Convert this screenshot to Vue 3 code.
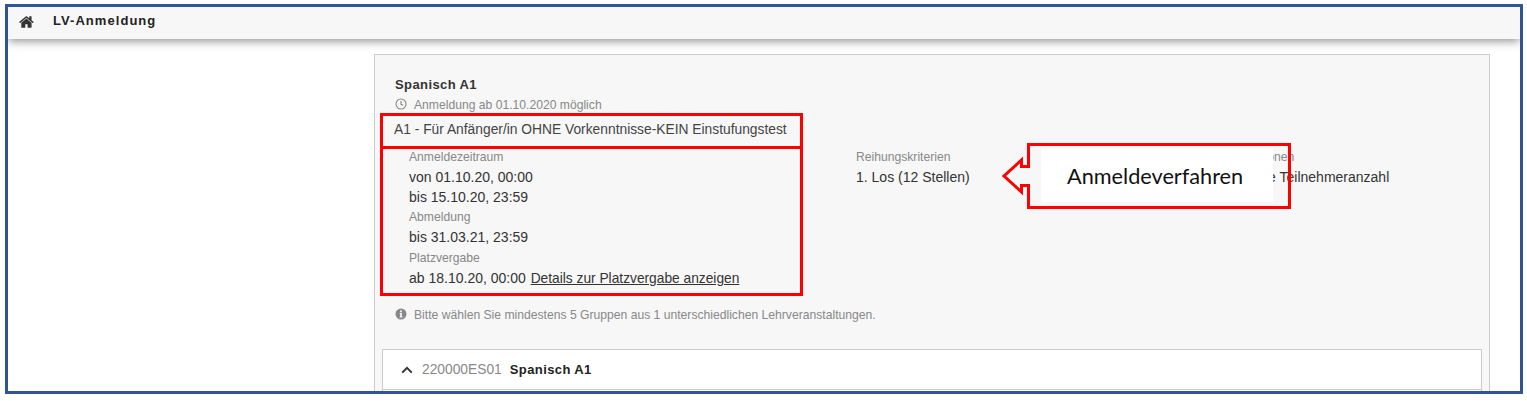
<template>
  <div class="page">
    <div class="frame">
      <header class="topbar">
        <svg class="home" viewBox="0 0 1792 1792" aria-hidden="true">
          <path d="M1408 992v480q0 26-19 45t-45 19h-384v-384h-256v384h-384q-26 0-45-19t-19-45v-480q0-1 .5-3t.5-3l575-474 575 474q1 2 1 6zm223-69l-62 74q-8 9-21 11h-3q-13 0-21-7l-692-577-692 577q-12 8-24 7-13-2-21-11l-62-74q-8-10-7-23.500t11-21.500l719-599q32-26 76-26t76 26l244 204v-195q0-14 9-23t23-9h192q14 0 23 9t9 23v408l219 182q10 8 11 21.500t-7 23.500z" />
        </svg>
        <span class="topbar-title">LV-Anmeldung</span>
      </header>

      <section class="panel">
        <div class="head">
          <div class="course">Spanisch A1</div>
          <div class="note clock-note">
            <svg class="note-icon" viewBox="0 0 12 12" aria-hidden="true">
              <circle cx="6" cy="6" r="5" fill="none" stroke="currentColor" stroke-width="1.100" />
              <path d="M6 3v3.300l2.200 1" fill="none" stroke="currentColor" stroke-width="1.100" />
            </svg>
            Anmeldung ab 01.10.2020 möglich
          </div>
          <div class="group-title">A1 - Für Anfänger/in OHNE Vorkenntnisse-KEIN Einstufungstest</div>

          <div class="columns">
            <div class="col">
              <div class="label">Anmeldezeitraum</div>
              <div class="value first">von 01.10.20, 00:00</div>
              <div class="value">bis 15.10.20, 23:59</div>
              <div class="label near">Abmeldung</div>
              <div class="value first">bis 31.03.21, 23:59</div>
              <div class="label nearer">Platzvergabe</div>
              <div class="value first">ab 18.10.20, 00:00 <a class="link">Details zur Platzvergabe anzeigen</a></div>
            </div>
            <div class="col">
              <div class="label">Reihungskriterien</div>
              <div class="value first">1. Los (12 Stellen)</div>
            </div>
            <div class="col">
              <div class="label shifted">Informationen</div>
              <div class="value first">Maximale Teilnehmeranzahl</div>
            </div>
          </div>

          <div class="note hint">
            <svg class="note-icon" viewBox="0 0 12 12" aria-hidden="true">
              <circle cx="6" cy="6" r="5.500" fill="currentColor" />
              <rect x="5.100" y="2.400" width="1.800" height="1.800" fill="#f6f6f6" />
              <path d="M4.700 5.100h2.200v3.300h.6v1H4.500v-1h.7V6.100h-.5z" fill="#f6f6f6" />
            </svg>
            Bitte wählen Sie mindestens 5 Gruppen aus 1 unterschiedlichen Lehrveranstaltungen.
          </div>
        </div>

        <div class="subject">
          <div class="subject-row">
            <svg class="chevron" viewBox="0 0 12 8" aria-hidden="true">
              <path d="M1.200 6.600L6 1.800l4.800 4.800" fill="none" stroke="currentColor" stroke-width="2" />
            </svg>
            <span class="code">220000ES01</span>
            <span class="subject-name">Spanisch A1</span>
          </div>
          <div class="subject-body"></div>
        </div>
      </section>
    </div>

    <!-- Anmerkungen aus dem Screenshot -->
    <div class="mark mark-title"></div>
    <div class="mark mark-details"></div>
    <svg class="arrow" viewBox="0 0 292 72" aria-hidden="true">
      <rect x="41" y="9" width="232" height="53" fill="#fff" />
      <path d="M28.500 4.500H289.500V67.500H28.500V45.500H21.500V52L4 36 21.500 20V26.500H28.500z" fill="none" stroke="#f00" stroke-width="3" />
    </svg>
    <div class="arrow-text">Anmeldeverfahren</div>
  </div>
</template>

<script setup>
</script>

<style>
html,
body {
  background: #fff;
}
</style>

<style scoped>
.page {
  position: relative;
  width: 1527px;
  height: 401px;
  overflow: hidden;
  font-family: "Liberation Sans", Arial, sans-serif;
  color: #333;
}

.frame {
  box-sizing: border-box;
  width: 1518px;
  height: 390px;
  margin: 4px 0 0 5px;
  border: 3px solid #2f5597;
  overflow: hidden;
  background: #fff;
  display: flex;
  flex-direction: column;
}

.topbar {
  position: relative;
  flex: none;
  box-sizing: border-box;
  height: 32px;
  display: flex;
  align-items: center;
  padding: 0 0 3px 11px;
  background: #f7f7f7;
  box-shadow: 0 2px 9px rgba(0, 0, 0, 0.45);
}

.home {
  width: 16px;
  height: 16px;
  fill: #333;
}

.topbar-title {
  margin: 0 0 2px 18px;
  font-size: 13px;
  font-weight: bold;
  letter-spacing: 1.05px;
  color: #222;
}

.panel {
  flex: none;
  box-sizing: border-box;
  height: 400px;
  margin: 15px 30px 0 366px;
  padding: 20px 7px 0;
  border: 1px solid #ccc;
  background: #f7f7f7;
}

.head {
  padding-left: 13px;
}

.course {
  font-size: 13px;
  line-height: 20px;
  font-weight: bold;
  letter-spacing: 0.4px;
}

.note {
  display: flex;
  align-items: center;
  font-size: 12.15px;
  line-height: 16px;
  color: #888;
}

.note-icon {
  width: 12px;
  height: 12px;
  margin-right: 7px;
  margin-top: -2px;
}

.clock-note {
  margin-top: 2px;
}

.group-title {
  margin-left: -1px;
  font-size: 13.8px;
  line-height: 34px;
  color: #444;
}

.columns {
  display: grid;
  grid-template-columns: 447px 360px 1fr;
  margin-top: 1px;
  padding-left: 14px;
}

.label {
  font-size: 12.15px;
  line-height: 18px;
  color: #888;
}

.label.near {
  margin-top: 1px;
}

.label.nearer {
  margin-top: 2px;
}

.label.shifted {
  margin-left: 4px;
}

.value {
  font-size: 14px;
  line-height: 20px;
  color: #333;
  white-space: nowrap;
}

.value.first {
  margin-top: 1px;
}

.link {
  margin-left: 1px;
  font-size: 13.75px;
  color: #333;
  text-decoration: underline;
}

.hint {
  margin-top: 18px;
}

.subject {
  margin-top: 26px;
  border: 1px solid #ccc;
  background: #fff;
}

.subject-row {
  height: 40px;
  display: flex;
  align-items: center;
  padding-left: 18px;
  border-bottom: 1px solid #ccc;
  box-sizing: border-box;
}

.chevron {
  width: 12px;
  height: 8px;
  color: #333;
}

.code {
  margin-left: 9px;
  font-size: 13.800px;
  color: #888;
}

.subject-name {
  margin-left: 8px;
  font-size: 13px;
  font-weight: bold;
  letter-spacing: 0.4px;
  color: #222;
}

.subject-body {
  height: 40px;
}

.mark {
  position: absolute;
  box-sizing: border-box;
  border: 3px solid #f00;
}

.mark-title {
  left: 380px;
  top: 113px;
  width: 423px;
  height: 36px;
}

.mark-details {
  left: 380px;
  top: 146px;
  width: 423px;
  height: 150px;
}

.arrow {
  position: absolute;
  left: 1000px;
  top: 140px;
  width: 292px;
  height: 72px;
}

.arrow-text {
  position: absolute;
  left: 1067px;
  top: 162px;
  font-family: Lato, "Open Sans", sans-serif;
  font-size: 21.700px;
  line-height: 28px;
  color: #111;
}
</style>
